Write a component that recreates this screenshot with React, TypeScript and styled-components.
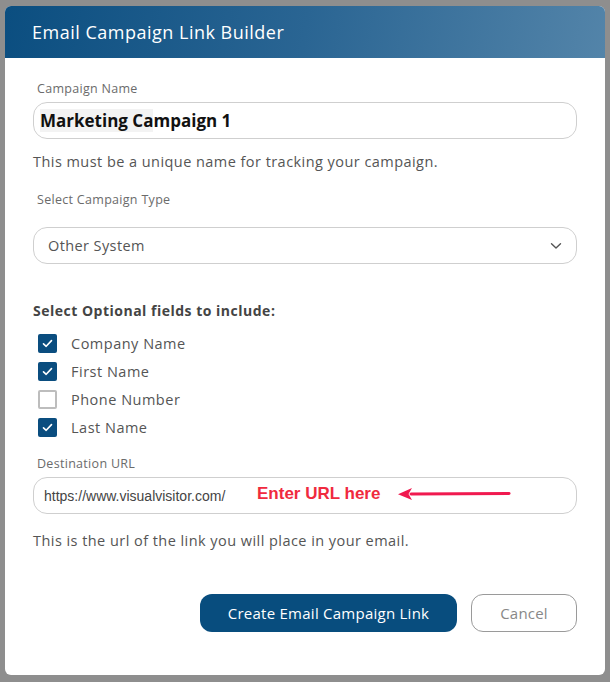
import React from "react";
import styled, { createGlobalStyle } from "styled-components";

const GlobalStyle = createGlobalStyle`
  html, body {
    margin: 0;
    padding: 0;
    background: #8e8e8e;
  }
  body {
    font-family: "Open Sans", "Noto Sans", Arial, sans-serif;
  }
`;

const fields = [
  { label: "Company Name", checked: true },
  { label: "First Name", checked: true },
  { label: "Phone Number", checked: false },
  { label: "Last Name", checked: true },
];

const Check = () => (
  <svg width="11" height="9" viewBox="0 0 11 9" fill="none">
    <path d="M1.5 4.8 L4.2 7.3 L9.5 1.6" stroke="#fff" strokeWidth="1.6" strokeLinecap="round" strokeLinejoin="round" />
  </svg>
);

const Chevron = () => (
  <svg width="12" height="8" viewBox="0 0 12 8" fill="none">
    <path d="M1.5 1.8 L6 6 L10.5 1.8" stroke="#555" strokeWidth="1.4" strokeLinecap="round" strokeLinejoin="round" />
  </svg>
);

const Arrow = () => (
  <svg width="114" height="14" viewBox="0 0 114 14" fill="none">
    <path d="M14 7 L112 6.5" stroke="#f0194f" strokeWidth="3" strokeLinecap="round" />
    <path d="M1 7.2 L15 1 L11.5 7 L15 13 Z" fill="#f0194f" />
  </svg>
);

export default function App() {
  return (
    <>
      <GlobalStyle />
      <Backdrop>
        <Modal>
          <Header>
            <Title>Email Campaign Link Builder</Title>
          </Header>
          <Body>
            <Label>Campaign Name</Label>
            <Field>
              <NameText>
                <Highlight>Marketing Ca</Highlight>mpaign 1
              </NameText>
            </Field>
            <Help>This must be a unique name for tracking your campaign.</Help>

            <Label $top={22}>Select Campaign Type</Label>
            <Field $top={20}>
              <SelectText>Other System</SelectText>
              <Chevron />
            </Field>

            <SectionTitle>Select Optional fields to include:</SectionTitle>
            <CheckList>
              {fields.map((f) => (
                <CheckRow key={f.label}>
                  <Box $checked={f.checked}>{f.checked && <Check />}</Box>
                  <CheckLabel>{f.label}</CheckLabel>
                </CheckRow>
              ))}
            </CheckList>

            <Label $top={20}>Destination URL</Label>
            <Field>
              <UrlText>https://www.visualvisitor.com/</UrlText>
              <Annotation>
                <AnnotationText>Enter URL here</AnnotationText>
                <Arrow />
              </Annotation>
            </Field>
            <Help $top={18}>This is the url of the link you will place in your email.</Help>

            <Actions>
              <PrimaryButton>Create Email Campaign Link</PrimaryButton>
              <SecondaryButton>Cancel</SecondaryButton>
            </Actions>
          </Body>
        </Modal>
      </Backdrop>
    </>
  );
}

const Backdrop = styled.div`
  min-height: 682px;
  box-sizing: border-box;
  padding: 6px 5px;
  background: #8e8e8e;
`;

const Modal = styled.div`
  width: 600px;
  height: 669px;
  background: #fff;
  border-radius: 6px;
  overflow: hidden;
  display: flex;
  flex-direction: column;
`;

const Header = styled.div`
  height: 52px;
  display: flex;
  align-items: center;
  padding: 0 27px;
  background: linear-gradient(100deg, #0b4e80 0%, #2a6593 50%, #5384a9 100%);
`;

const Title = styled.h1`
  margin: 0;
  color: #fff;
  font-size: 18px;
  font-weight: 500;
  letter-spacing: 0.5px;
`;

const Body = styled.div`
  padding: 24px 28px 0;
  display: flex;
  flex-direction: column;
`;

const Label = styled.div<{ $top?: number }>`
  margin-top: ${(p) => p.$top ?? 0}px;
  padding-left: 4px;
  font-size: 12.5px;
  letter-spacing: 0.3px;
  color: #6b6b6b;
  line-height: 14px;
`;

const Field = styled.div<{ $top?: number }>`
  position: relative;
  margin-top: ${(p) => p.$top ?? 6}px;
  height: 37px;
  box-sizing: border-box;
  border: 1px solid #cfcfcf;
  border-radius: 14px;
  display: flex;
  align-items: center;
  justify-content: space-between;
  padding: 0 14px 0 6px;
`;

const NameText = styled.span`
  font-size: 17px;
  font-weight: 700;
  color: #111;
`;

const Highlight = styled.span`
  background: #f3f3f3;
`;

const SelectText = styled.span`
  padding-left: 8px;
  font-size: 14.5px;
  letter-spacing: 0.4px;
  color: #555;
`;

const UrlText = styled.span`
  padding-left: 4px;
  font-family: "Liberation Sans", Arial, sans-serif;
  font-size: 14px;
  color: #444;
`;

const Annotation = styled.div`
  position: absolute;
  left: 223px;
  top: 6px;
  display: flex;
  align-items: center;
  gap: 17px;
`;

const AnnotationText = styled.span`
  font-family: "Liberation Sans", Arial, sans-serif;
  font-size: 17px;
  font-weight: 700;
  color: #f02a3e;
`;

const Help = styled.p<{ $top?: number }>`
  margin: ${(p) => p.$top ?? 14}px 0 0;
  font-size: 14.5px;
  letter-spacing: 0.45px;
  color: #555;
  line-height: 18px;
`;

const SectionTitle = styled.div`
  margin-top: 37px;
  font-size: 14px;
  font-weight: 700;
  letter-spacing: 0.5px;
  color: #444;
`;

const CheckList = styled.div`
  margin-top: 14px;
  display: flex;
  flex-direction: column;
  gap: 9px;
  padding-left: 5px;
`;

const CheckRow = styled.div`
  display: flex;
  align-items: center;
  gap: 14px;
  height: 19px;
`;

const Box = styled.div<{ $checked: boolean }>`
  width: 19px;
  height: 19px;
  box-sizing: border-box;
  border-radius: 2px;
  display: flex;
  align-items: center;
  justify-content: center;
  background: ${(p) => (p.$checked ? "#0a4d7f" : "#fff")};
  border: ${(p) => (p.$checked ? "none" : "2px solid #bdbdbd")};
`;

const CheckLabel = styled.span`
  font-size: 14.5px;
  letter-spacing: 0.5px;
  color: #555;
`;

const Actions = styled.div`
  margin-top: 44px;
  display: flex;
  justify-content: flex-end;
  gap: 14px;
`;

const PrimaryButton = styled.button`
  width: 257px;
  height: 38px;
  border: none;
  border-radius: 12px;
  background: #084d7e;
  color: #fff;
  font-family: inherit;
  font-size: 15px;
  letter-spacing: 0.25px;
`;

const SecondaryButton = styled.button`
  width: 106px;
  height: 38px;
  border: 1px solid #9a9a9a;
  border-radius: 12px;
  background: #fff;
  color: #888;
  font-family: inherit;
  font-size: 15px;
  letter-spacing: 0.2px;
`;
